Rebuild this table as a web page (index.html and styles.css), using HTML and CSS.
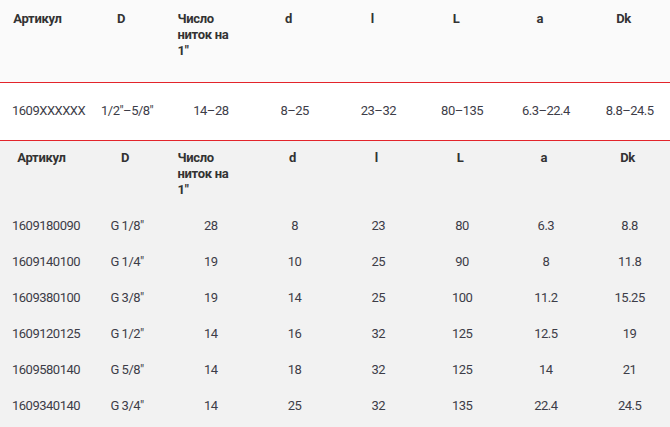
FILE: index.html
```html
<!DOCTYPE html>
<html lang="ru">
<head>
<meta charset="utf-8">
<link rel="stylesheet" href="styles.css">
</head>
<body>
<table class="spec spec-summary">
  <thead>
    <tr>
      <th>Артикул</th><th>D</th><th class="th-wrap"><span class="wrap">Число ниток на 1"</span></th><th>d</th><th>l</th><th>L</th><th>a</th><th>Dk</th>
    </tr>
  </thead>
  <tbody>
    <tr>
      <td>1609XXXXXX</td><td>1/2"–5/8"</td><td>14–28</td><td>8–25</td><td>23–32</td><td>80–135</td><td>6.3–22.4</td><td>8.8–24.5</td>
    </tr>
  </tbody>
</table>
<table class="spec spec-detail">
  <thead>
    <tr>
      <th>Артикул</th><th>D</th><th class="th-wrap"><span class="wrap">Число ниток на 1"</span></th><th>d</th><th>l</th><th>L</th><th>a</th><th>Dk</th>
    </tr>
  </thead>
  <tbody>
    <tr><td>1609180090</td><td>G 1/8"</td><td>28</td><td>8</td><td>23</td><td>80</td><td>6.3</td><td>8.8</td></tr>
    <tr><td>1609140100</td><td>G 1/4"</td><td>19</td><td>10</td><td>25</td><td>90</td><td>8</td><td>11.8</td></tr>
    <tr><td>1609380100</td><td>G 3/8"</td><td>19</td><td>14</td><td>25</td><td>100</td><td>11.2</td><td>15.25</td></tr>
    <tr><td>1609120125</td><td>G 1/2"</td><td>14</td><td>16</td><td>32</td><td>125</td><td>12.5</td><td>19</td></tr>
    <tr><td>1609580140</td><td>G 5/8"</td><td>14</td><td>18</td><td>32</td><td>125</td><td>14</td><td>21</td></tr>
    <tr><td>1609340140</td><td>G 3/4"</td><td>14</td><td>25</td><td>32</td><td>135</td><td>22.4</td><td>24.5</td></tr>
  </tbody>
</table>
</body>
</html>
```
FILE: styles.css
```css
html, body {
  margin: 0;
  padding: 0;
  background: #f2f2f2;
}
body {
  font-family: Roboto, "Liberation Sans", sans-serif;
  font-size: 13px;
  line-height: 16px;
  color: #333;
}
.spec {
  width: 670px;
  table-layout: fixed;
  border-collapse: collapse;
  border-spacing: 0;
}
.spec th {
  font-weight: 700;
  text-align: center;
  vertical-align: top;
  letter-spacing: -0.3px;
  color: #333;
}
.spec td {
  font-weight: 400;
  text-align: center;
  vertical-align: top;
  padding: 10px 9px 10px 12px;
  white-space: nowrap;
  letter-spacing: -0.5px;
  color: #3d3d48;
}
.spec th.th-wrap {
  text-align: left;
  padding-left: 10px;
}
.wrap {
  display: block;
  width: 60px;
}
.spec-summary thead {
  background: #fafafa;
}
.spec-summary th {
  height: 82px;
  box-sizing: border-box;
  padding: 11px 19px 0 10px;
  border-bottom: 1px solid #e3242b;
}
.spec-summary tbody tr {
  background: #fff;
}
.spec-summary td {
  padding-top: 20px;
  padding-bottom: 21px;
  border-bottom: 1px solid #e3242b;
}
.spec-detail {
  background: #f2f2f2;
}
.spec-detail th {
  padding: 9px 11px 10px 10px;
}
```
